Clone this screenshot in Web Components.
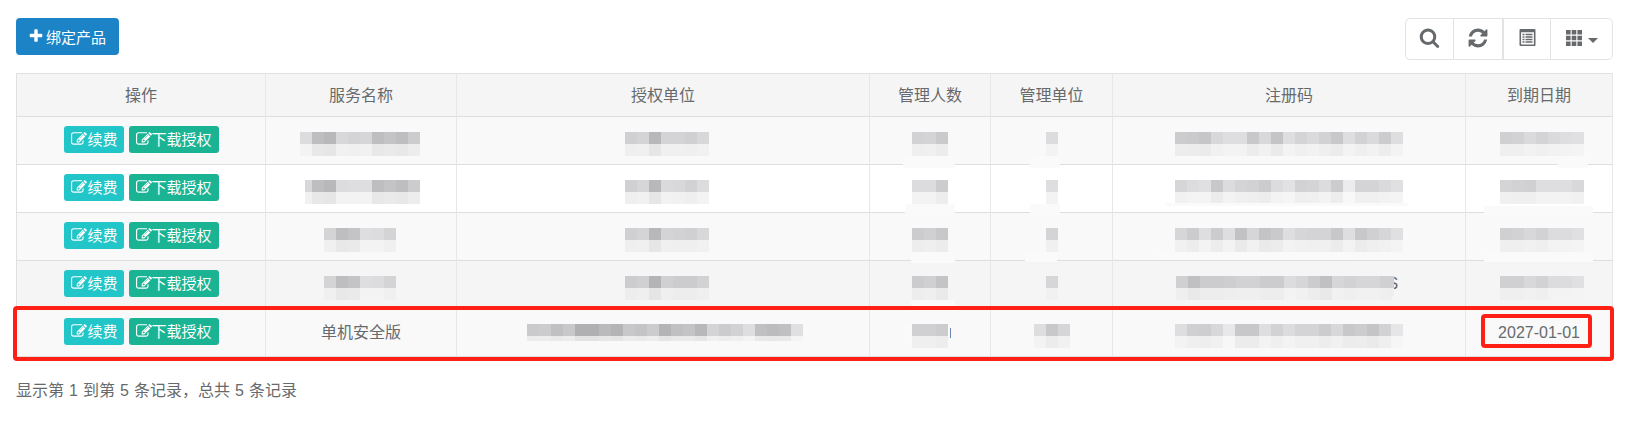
<!DOCTYPE html>
<html lang="zh">
<head>
<meta charset="utf-8">
<title>绑定产品</title>
<style>
html,body{margin:0;background:#fff}
body{font:16px "Liberation Sans","Noto Sans CJK SC",sans-serif;color:#676a6c}
</style>
</head>
<body>
<license-page>
    <page-toolbar slot="bar"></page-toolbar>
    <license-table slot="table">
        <license-row head>
            <span>操作</span><span>服务名称</span><span>授权单位</span><span>管理人数</span><span>管理单位</span><span>注册码</span><span>到期日期</span>
        </license-row>
        <license-row>
            <row-actions></row-actions>
            <blur-text shift="-2" levels="dc be b8 d8 d4 d6 be c4 be cc"></blur-text>
            <blur-text shift="7" levels="d0 d4 b8 d4 d4 d0 d8"></blur-text>
            <blur-text levels="d2 d4 ca"></blur-text>
            <blur-text levels="dc"></blur-text>
            <blur-text levels="cc ca c6 d8 de de c8 d8 c4 de d4 da d2 c8 de d2 da cc de"></blur-text>
            <blur-text shift="5" levels="d0 d2 da d4 da de e0"></blur-text>
        </license-row>
        <license-row>
            <row-actions></row-actions>
            <blur-text shift="-2" clip="5" levels="d8 be b8 dc de de be c4 be cc"></blur-text>
            <blur-text shift="7" levels="d0 d6 b8 da d8 d2 dc"></blur-text>
            <blur-text levels="dc dc cc"></blur-text>
            <blur-text levels="de"></blur-text>
            <blur-text levels="d6 dc e0 c8 dc d4 d2 cc dc e2 d2 d4 dc cc ec d4 d4 da e0"></blur-text>
            <blur-text shift="5" levels="d4 d2 d0 de de de d8"></blur-text>
        </license-row>
        <license-row>
            <row-actions></row-actions>
            <blur-text shift="-2" levels="d4 be c4 de dc d4"></blur-text>
            <blur-text shift="7" levels="d0 d4 b8 d4 d2 d0 d8"></blur-text>
            <blur-text levels="cc d0 c8"></blur-text>
            <blur-text levels="d4"></blur-text>
            <blur-text levels="d6 cc de cc de c2 d6 c4 ca de d6 d4 d4 c8 de c8 d0 d6 e0"></blur-text>
            <blur-text shift="5" levels="d0 d2 d8 d2 dc dc e0"></blur-text>
        </license-row>
        <license-row>
            <row-actions></row-actions>
            <blur-text shift="-2" levels="d4 be c4 de dc d4"></blur-text>
            <blur-text shift="7" levels="cc d0 b4 d0 cc cc d2"></blur-text>
            <blur-text levels="cc d0 c4"></blur-text>
            <blur-text levels="d6"></blur-text>
            <blur-text shift="-10" levels="d0 c0 cc cc ce d2 d2 cc cc dc d6 cc c0 d6 d2 d6 d6 d0"></blur-text>
            <blur-text shift="5" levels="d0 d0 d8 d2 dc dc e0"></blur-text>
        </license-row>
        <license-row>
            <row-actions></row-actions>
            <span style="padding-bottom:3px">单机安全版</span>
            <blur-text short shift="4" levels="ca cc c0 c8 b0 b0 ba b4 c8 c4 cc b4 c0 c4 b8 d4 cc d2 de c0 bc c0 e0"></blur-text>
            <blur-text levels="d0 d0 cc"></blur-text>
            <blur-text levels="de c8 d6"></blur-text>
            <blur-text levels="de d0 ce d8 e8 c8 c8 de d2 dc d4 d4 cc d8 c8 cc c4 d2 e6"></blur-text>
            <span>2027-01-01</span>
        </license-row>
    </license-table>
    <span slot="foot">显示第 1 到第 5 条记录，总共 5 条记录</span>
    <markup-layer slot="over"></markup-layer>
</license-page>

<script>
const ICONS = {
    plus: '<svg viewBox="0 0 1792 1792"><path d="M1600 736v192q0 40-28 68t-68 28h-416v416q0 40-28 68t-68 28h-192q-40 0-68-28t-28-68v-416h-416q-40 0-68-28t-28-68v-192q0-40 28-68t68-28h416v-416q0-40 28-68t68-28h192q40 0 68 28t28 68v416h416q40 0 68 28t28 68z"/></svg>',
    edit: '<svg viewBox="0 0 1792 1792"><path d="M888 1184l116-116-152-152-116 116v56h96v96h56zm440-720q-16-16-33 1l-350 350q-17 17-1 33t33-1l350-350q17-17 1-33zm80 594v190q0 119-84.5 203.5t-203.5 84.5h-832q-119 0-203.5-84.5t-84.5-203.5v-832q0-119 84.5-203.5t203.5-84.5h832q63 0 117 25 15 7 18 23 3 17-9 29l-49 49q-14 14-32 8-23-6-45-6h-832q-66 0-113 47t-47 113v832q0 66 47 113t113 47h832q66 0 113-47t47-113v-126q0-13 9-22l64-64q15-15 35-7t20 29zm-96-738l288 288-672 672h-288v-288zm444 132l-92 92-288-288 92-92q28-28 68-28t68 28l152 152q28 28 28 68t-28 68z"/></svg>',
    search: '<svg viewBox="0 0 1792 1792"><path d="M1216 832q0-185-131.5-316.5t-316.5-131.5-316.5 131.5-131.5 316.5 131.5 316.5 316.5 131.5 316.5-131.5 131.5-316.5zm512 832q0 52-38 90t-90 38q-54 0-90-38l-343-342q-179 124-399 124-143 0-273.5-55.5t-225-150-150-225-55.5-273.5 55.5-273.5 150-225 225-150 273.5-55.5 273.5 55.5 225 150 150 225 55.5 273.5q0 220-124 399l343 343q37 37 37 90z"/></svg>',
    refresh: '<svg viewBox="0 0 1792 1792"><path d="M1639 1056q0 5-1 7-64 268-268 434.5t-478 166.5q-146 0-282.5-55t-243.5-157l-129 129q-19 19-45 19t-45-19-19-45v-448q0-26 19-45t45-19h448q26 0 45 19t19 45-19 45l-137 137q71 66 161 102t187 36q134 0 250-65t186-179q11-17 53-117 8-23 30-23h192q13 0 22.5 9.5t9.5 22.5zm25-800v448q0 26-19 45t-45 19h-448q-26 0-45-19t-19-45 19-45l138-138q-148-137-349-137-134 0-250 65t-186 179q-11 17-53 117-8 23-30 23h-199q-13 0-22.5-9.5t-9.5-22.5v-7q65-268 270-434.5t480-166.5q146 0 284 55.5t245 156.5l130-129q19-19 45-19t45 19 19 45z"/></svg>',
    list: '<svg viewBox="0 0 16 17"><path fill-rule="evenodd" d="M1 0h14a1 1 0 0 1 1 1v15a1 1 0 0 1-1 1H1a1 1 0 0 1-1-1V1a1 1 0 0 1 1-1zM1.6 3.2v12.2h12.8V3.2zM3 4.8h2v1.5H3zM6 4.8h7v1.5H6zM3 7.3h2v1.5H3zM6 7.3h7v1.5H6zM3 9.8h2v1.5H3zM6 9.8h7v1.5H6zM3 12.3h2v1.5H3zM6 12.3h7v1.5H6z"/></svg>',
    th: '<svg viewBox="0 0 16 16"><path d="M0 0h4.6v4.6H0zM5.7 0h4.6v4.6H5.7zM11.4 0H16v4.6h-4.6zM0 5.7h4.6v4.6H0zM5.7 5.7h4.6v4.6H5.7zM11.4 5.7H16v4.6h-4.6zM0 11.4h4.6V16H0zM5.7 11.4h4.6V16H5.7zM11.4 11.4H16V16h-4.6z"/></svg>'
};

customElements.define('fa-icon', class extends HTMLElement {
    constructor() {
        super();
        this.attachShadow({ mode: 'open' }).innerHTML = `
        <style>
        :host {display:inline-flex;flex:none;width:var(--size,1em);height:var(--size,1em)}
        span {display:contents}
        svg {display:block;width:100%;height:100%;fill:currentColor}
        </style>
        <span></span>`;
    }
    connectedCallback() {
        this.shadowRoot.querySelector('span').innerHTML = ICONS[this.getAttribute('name')];
    }
});

customElements.define('license-page', class extends HTMLElement {
    constructor() {
        super();
        this.attachShadow({ mode: 'open' }).innerHTML = `
        <style>
        :host {
            display:flex;flex-direction:column;
            position:relative;
            height:424px;box-sizing:border-box;
            padding:18px 13px 0 16px;
        }
        ::slotted([slot=bar]) {margin-bottom:13px}
        ::slotted([slot=foot]) {margin-top:23px;line-height:22px;font-size:16px;word-spacing:.6px}
        </style>
        <slot name=bar></slot>
        <slot name=table></slot>
        <slot name=foot></slot>
        <slot name=over></slot>`;
    }
});

customElements.define('page-toolbar', class extends HTMLElement {
    constructor() {
        super();
        this.attachShadow({ mode: 'open' }).innerHTML = `
        <style>
        :host {display:flex;justify-content:space-between;align-items:flex-start;height:42px}
        .add {
            display:flex;align-items:center;gap:2px;
            height:37px;width:103px;box-sizing:border-box;padding:0 0 1px 12px;
            border-radius:4px;background:#1c84c6;color:#fff;font-size:15px;
        }
        .add fa-icon {--size:16px}
        .tools {
            display:flex;height:42px;box-sizing:border-box;
            border:1px solid #e3e3e3;border-radius:5px;color:#676a6c;
        }
        .tools div {
            display:flex;align-items:center;justify-content:center;gap:6px;
            box-sizing:border-box;padding-bottom:3px;
            width:48px;border-right:1px solid #e3e3e3;
        }
        .tools div:nth-child(2) {width:50px;border-right-width:2px}
        .tools div:nth-child(3) {width:47px}
        .tools div:last-child {width:61px;border:0}
        .search {--size:21px}
        .refresh {--size:22px}
        .list {--size:17px}
        .th {--size:16px}
        i {width:0;height:0;border:5px solid transparent;border-top-color:#676a6c;border-bottom:0;margin-top:6px}
        </style>
        <div class=add><fa-icon name=plus></fa-icon>绑定产品</div>
        <div class=tools>
            <div><fa-icon class=search name=search></fa-icon></div>
            <div><fa-icon class=refresh name=refresh></fa-icon></div>
            <div><fa-icon class=list name=list></fa-icon></div>
            <div><fa-icon class=th name=th></fa-icon><i></i></div>
        </div>`;
    }
});

customElements.define('license-table', class extends HTMLElement {
    constructor() {
        super();
        this.attachShadow({ mode: 'open' }).innerHTML = `
        <style>
        :host {display:block;border-left:1px solid #e0e0e0;border-top:1px solid #e0e0e0}
        ::slotted(license-row:nth-of-type(even)) {--row:#f9f9f9}
        ::slotted(license-row:nth-of-type(3)) {--row:#fff}
        ::slotted(license-row:nth-of-type(5)) {--row:#f5f5f5}
        </style>
        <slot></slot>`;
    }
});

customElements.define('license-row', class extends HTMLElement {
    constructor() {
        super();
        this.attachShadow({ mode: 'open' }).innerHTML = `
        <style>
        :host {
            display:grid;
            grid-template-columns:249px 191px 413px 121px 122px 353px 147px;
            height:48px;box-sizing:border-box;
            background:var(--row,#fff);
        }
        :host([head]) {height:43px;background:#f5f5f5}
        ::slotted(*) {
            display:flex;align-items:center;justify-content:center;
            border-right:1px solid #e7e7e7;border-bottom:1px solid #dedede;
            box-sizing:border-box;
        }
        :host([head]) ::slotted(*) {padding-bottom:2px}
        </style>
        <slot></slot>`;
    }
});

customElements.define('row-actions', class extends HTMLElement {
    constructor() {
        super();
        this.attachShadow({ mode: 'open' }).innerHTML = `
        <style>
        :host {gap:5px;padding:0 0 2px 1px}
        span {
            display:flex;align-items:center;white-space:nowrap;box-sizing:border-box;
            height:27px;padding:0 6px 2px 7px;
            border-radius:3px;color:#fff;font-size:15px;
        }
        span fa-icon {--size:16px}
        .renew {background:#23c6c8}
        .down {background:#1ab394;padding-right:7px}
        </style>
        <span class=renew><fa-icon name=edit></fa-icon>续费</span>
        <span class=down><fa-icon name=edit></fa-icon>下载授权</span>`;
    }
});

// mosaic over the hidden values: a row of dark blocks, a fainter row under it
customElements.define('blur-text', class extends HTMLElement {
    constructor() {
        super();
        this.attachShadow({ mode: 'open' }).innerHTML = `
        <style>
        :host {align-items:flex-start !important;padding-top:15px}
        div {display:grid;grid-auto-flow:column;grid-auto-columns:12px;grid-template-rows:12px var(--low,12px)}
        b {display:block}
        </style>
        <div></div>`;
    }
    connectedCallback() {
        const box = this.shadowRoot.querySelector('div');
        if (this.hasAttribute('short')) box.style.setProperty('--low', '5px');
        if (this.hasAttribute('clip')) box.style.clipPath = `inset(0 0 0 ${this.getAttribute('clip')}px)`;
        box.style.marginLeft = (+this.getAttribute('shift') || 0) + 'px';
        box.innerHTML = this.getAttribute('levels').split(' ').map(h => {
            const top = parseInt(h, 16), low = Math.round(255 - (255 - top) * .35);
            return `<b style="background:rgb(${top},${top},${top + 2})"></b><b style="background:rgb(${low},${low},${low})"></b>`;
        }).join('');
    }
});

// everything painted over the finished table: leftovers of the mosaic and the red marks
customElements.define('markup-layer', class extends HTMLElement {
    constructor() {
        super();
        const smudges = [
            [903, 156, 52, 12], [905, 204, 50, 12], [911, 252, 44, 11], [911, 300, 44, 6],
            [1030, 156, 30, 12], [1030, 204, 30, 12], [1025, 252, 32, 10],
            [1558, 156, 30, 12], [1484, 206, 109, 9], [1484, 252, 109, 10], [1165, 203, 243, 3], [1156, 252, 194, 6],
            [904, 325, 8, 20]
        ];
        this.attachShadow({ mode: 'open' }).innerHTML = `
        <style>
        :host {position:absolute;inset:0;pointer-events:none}
        div {position:absolute;box-sizing:border-box}
        .red {border:4px solid #ff2015;border-radius:4px}
        .tail {line-height:20px;font-size:16px;color:#676a6c}
        </style>
        ${smudges.map(([x, y, w, h]) =>
            `<div style="left:${x}px;top:${y}px;width:${w}px;height:${h}px;background:#fafafa"></div>`).join('')}
        <div class=tail style="left:1387.5px;top:274px">S</div>
        <div style="left:1386px;top:276px;width:8px;height:12px;background:#d0d0d2"></div>
        <div style="left:1386px;top:288px;width:8px;height:8px;background:#eee"></div>
        <div style="left:950px;top:328px;width:1px;height:10px;background:#6b86b0"></div>
        <div class=red style="left:13px;top:306px;width:1601px;height:55px"></div>
        <div class=red style="left:1481px;top:314px;width:111px;height:34px"></div>`;
    }
});
</script>
</body>
</html>
